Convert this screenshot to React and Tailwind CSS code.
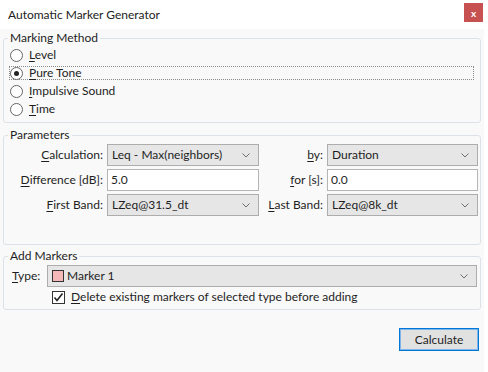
import React from 'react';

const font = { fontFamily: 'Lato, "Noto Sans", sans-serif' };

const Chevron = () => (
  <svg width="8" height="5" viewBox="0 0 8 5" className="shrink-0">
    <polyline points="0.5,0.5 4,4 7.5,0.5" fill="none" stroke="#707070" strokeWidth="1" />
  </svg>
);

const Key = ({ children }) => <span className="underline underline-offset-2">{children}</span>;

const Combo = ({ children, className = '' }) => (
  <div className={`h-[22px] flex items-center justify-between pl-[4px] pr-[8px] bg-[#e6e6e6] border border-[#adadad] ${className}`}>
    <div className="flex items-center">{children}</div>
    <Chevron />
  </div>
);

const TextBox = ({ value }) => (
  <div className="h-[22px] flex items-center px-[3px] bg-white border border-[#b5b5b5]">{value}</div>
);

const Radio = ({ checked, focused, label }) => (
  <div className="h-[18px] flex items-center">
    <div
      className={`ml-[5px] mr-[6px] h-[14px] flex-1 flex items-center border ${
        focused ? 'border-dotted border-[#8a8a8a]' : 'border-transparent'
      }`}
    >
      <div className="w-[13px] h-[13px] rounded-full border border-[#666] bg-white flex items-center justify-center">
        {checked && <div className="w-[5px] h-[5px] rounded-full bg-[#222]" />}
      </div>
      <span className="ml-[6px]">{label}</span>
    </div>
  </div>
);

const Group = ({ title, className = '', children }) => (
  <fieldset className={`mx-[3px] border border-[#dce2e8] rounded-[3px] ${className}`}>
    <legend className="ml-[4px] px-[2px] leading-[16px]">{title}</legend>
    {children}
  </fieldset>
);

export default function App() {
  return (
    <div className="w-[488px] h-[372px] bg-white text-[12px] text-[#1e1e1e]" style={font}>
      <div className="w-[484px] h-[372px] flex flex-col">
        {/* Title bar */}
        <div className="h-[29px] flex items-center justify-between bg-white">
          <span className="ml-[8px] text-[#222]">Automatic Marker Generator</span>
          <div className="mr-[1px] mb-[4px] w-[19px] h-[19px] bg-[#c75050] flex items-center justify-center text-white text-[10px] font-bold leading-none">
            x
          </div>
        </div>

        <div className="flex-1 bg-[#f9f9f9] flex flex-col pt-[1px]">
          <Group title="Marking Method" className="pb-[4px]">
            <Radio label={<><Key>L</Key>evel</>} />
            <Radio checked focused label={<><Key>P</Key>ure Tone</>} />
            <Radio label={<><Key>I</Key>mpulsive Sound</>} />
            <Radio label={<><Key>T</Key>ime</>} />
          </Group>

          <Group title="Parameters" className="mt-[4px] pb-[28px]">
            <div className="mt-[1px] grid grid-cols-[99px_152px_60px_151px] gap-x-[4px] gap-y-[3px] items-center">
              <div className="text-right"><Key>C</Key>alculation:</div>
              <Combo>Leq - Max(neighbors)</Combo>
              <div className="text-right"><Key>b</Key>y:</div>
              <Combo>Duration</Combo>

              <div className="text-right"><Key>D</Key>ifference [dB]:</div>
              <TextBox value="5.0" />
              <div className="text-right"><Key>f</Key>or [s]:</div>
              <TextBox value="0.0" />

              <div className="text-right"><Key>F</Key>irst Band:</div>
              <Combo>LZeq@31.5_dt</Combo>
              <div className="text-right"><Key>L</Key>ast Band:</div>
              <Combo>LZeq@8k_dt</Combo>
            </div>
          </Group>

          <Group title="Add Markers" className="mt-[3px] pb-[2px]">
            <div className="mt-[1px] flex items-center pl-[8px] pr-[3px]">
              <span className="w-[35px]"><Key>T</Key>ype:</span>
              <Combo className="flex-1 pl-[2px]">
                <span className="w-[12px] h-[12px] bg-[#f4b8b8] border border-[#333] mr-[3px]" />
                Marker 1
              </Combo>
            </div>
            <div className="h-[20px] flex items-center pl-[48px]">
              <div className="w-[13px] h-[13px] bg-white border border-[#333] flex items-center justify-center">
                <svg width="11" height="11" viewBox="0 0 11 11">
                  <polyline points="1.5,5.5 4,8.5 9.5,1.5" fill="none" stroke="#222" strokeWidth="1.6" />
                </svg>
              </div>
              <span className="ml-[6px]"><Key>D</Key>elete existing markers of selected type before adding</span>
            </div>
          </Group>

          <div className="flex justify-end pr-[5px] mt-[18px]">
            <div className="w-[80px] h-[23px] flex items-center justify-center bg-[#e1e1e1] border border-[#0078d7] shadow-[inset_0_0_0_1px_#7eb4ea]">
              Calculate
            </div>
          </div>
        </div>
      </div>
    </div>
  );
}
